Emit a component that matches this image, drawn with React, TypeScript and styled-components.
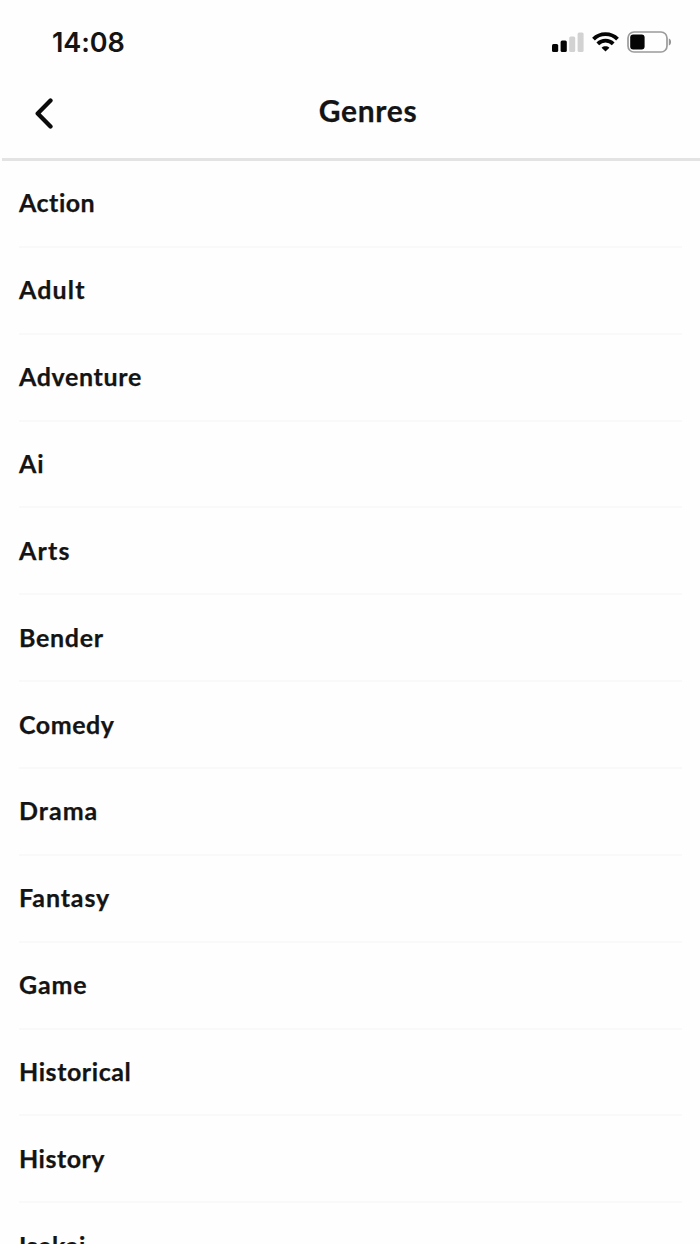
import React from "react";
import styled, { createGlobalStyle } from "styled-components";

const GlobalStyle = createGlobalStyle`
  * { box-sizing: border-box; }
  body { margin: 0; background: #fefefe; }
`;

const Screen = styled.main`
  display: flex;
  flex-direction: column;
  width: 700px;
  height: 1244px;
  overflow: hidden;
  background: #fefefe;
  color: #141414;
  font-family: Lato, sans-serif;
`;

const StatusBar = styled.div`
  display: flex;
  flex: none;
  align-items: center;
  justify-content: space-between;
  height: 84px;
  padding: 0 28px 0 52px;
`;

const Clock = styled.time`
  padding-top: 2px;
  font: 600 27px/32px Inter, sans-serif;
  letter-spacing: -0.1px;
`;

const StatusIcons = styled.div`
  display: flex;
  align-items: center;
  gap: 8px;
`;

const Header = styled.header`
  display: grid;
  flex: none;
  grid-template-columns: 68px 1fr 68px;
  align-items: center;
  height: 77px;
  margin-left: 2px;
  padding-bottom: 18px;
  border-bottom: 3px solid #e3e3e3;
`;

const BackButton = styled.button`
  display: flex;
  padding: 2px 0 0 31px;
  border: 0;
  background: none;
  color: #0b0b0b;
`;

const Title = styled.h1`
  margin: 0;
  padding: 0 0 4px 34px;
  text-align: center;
  font-size: 30px;
  line-height: 40px;
  font-weight: 700;
  letter-spacing: 0.7px;
  -webkit-text-stroke: 0.25px currentColor;
`;

const List = styled.ul`
  flex: none;
  margin: 0;
  padding: 0 18px 0 19px;
  list-style: none;
`;

const Row = styled.li`
  display: flex;
  align-items: center;
  height: 86.87px;
  border-bottom: 2px solid #f9f9f9;
`;

const Label = styled.span<{ $spacing: number }>`
  padding-bottom: 2px;
  font-size: 25px;
  line-height: 34px;
  font-weight: 700;
  letter-spacing: ${(p) => p.$spacing}px;
  -webkit-text-stroke: 0.25px currentColor;
`;

const genres = [
  { name: "Action", spacing: 0.5 },
  { name: "Adult", spacing: 1.15 },
  { name: "Adventure", spacing: 0.65 },
  { name: "Ai", spacing: 0.8 },
  { name: "Arts", spacing: 1.15 },
  { name: "Bender", spacing: 0.7 },
  { name: "Comedy", spacing: 0.53 },
  { name: "Drama", spacing: 1 },
  { name: "Fantasy", spacing: 0.87 },
  { name: "Game", spacing: 0.85 },
  { name: "Historical", spacing: 0.57 },
  { name: "History", spacing: 0.5 },
  { name: "Isekai", spacing: 0.5 },
];

const SignalIcon = () => (
  <svg width="32" height="20" viewBox="0 0 32 20">
    <rect x="0" y="12" width="6.2" height="8" rx="1.5" fill="#050505" />
    <rect x="8.6" y="8.5" width="6.2" height="11.5" rx="1.5" fill="#050505" />
    <rect x="17.2" y="4.5" width="6" height="15.5" rx="1.5" fill="#d2d2d2" />
    <rect x="25.6" y="0.5" width="6" height="19.5" rx="1.5" fill="#d2d2d2" />
  </svg>
);

const WifiIcon = () => (
  <svg width="27" height="20" viewBox="0 0 27 20" fill="none" stroke="#050505" strokeWidth="3.9">
    <path d="M1.5 7.1C8.1.5 18.9.5 25.5 7.1" />
    <path d="M5.8 11.8C10.1 7.6 16.9 7.6 21.2 11.8" />
    <path d="M13.5 19.6L9.6 15.7C11.8 13.8 15.2 13.8 17.4 15.7Z" fill="#050505" stroke="none" />
  </svg>
);

const BatteryIcon = () => (
  <svg width="45" height="22" viewBox="0 0 45 22">
    <rect x="1" y="1" width="39" height="20" rx="6" fill="none" stroke="#9b9b9b" strokeWidth="1.7" />
    <rect x="3.2" y="3.5" width="14.4" height="15" rx="3" fill="#050505" />
    <path d="M41.8 7.5C44.8 8.4 44.8 13.6 41.8 14.5Z" fill="#969696" />
  </svg>
);

export default function App() {
  return (
    <Screen>
      <GlobalStyle />
      <StatusBar>
        <Clock>14:08</Clock>
        <StatusIcons>
          <SignalIcon />
          <WifiIcon />
          <BatteryIcon />
        </StatusIcons>
      </StatusBar>
      <Header>
        <BackButton aria-label="Back">
          <svg width="22" height="32" viewBox="0 0 22 32" fill="none" stroke="currentColor" strokeWidth="4.3" strokeLinecap="round" strokeLinejoin="round">
            <path d="M17.5 3.5L4.7 16.5L17.5 29.5" />
          </svg>
        </BackButton>
        <Title>Genres</Title>
      </Header>
      <List>
        {genres.map((g) => (
          <Row key={g.name}>
            <Label $spacing={g.spacing}>{g.name}</Label>
          </Row>
        ))}
      </List>
    </Screen>
  );
}
